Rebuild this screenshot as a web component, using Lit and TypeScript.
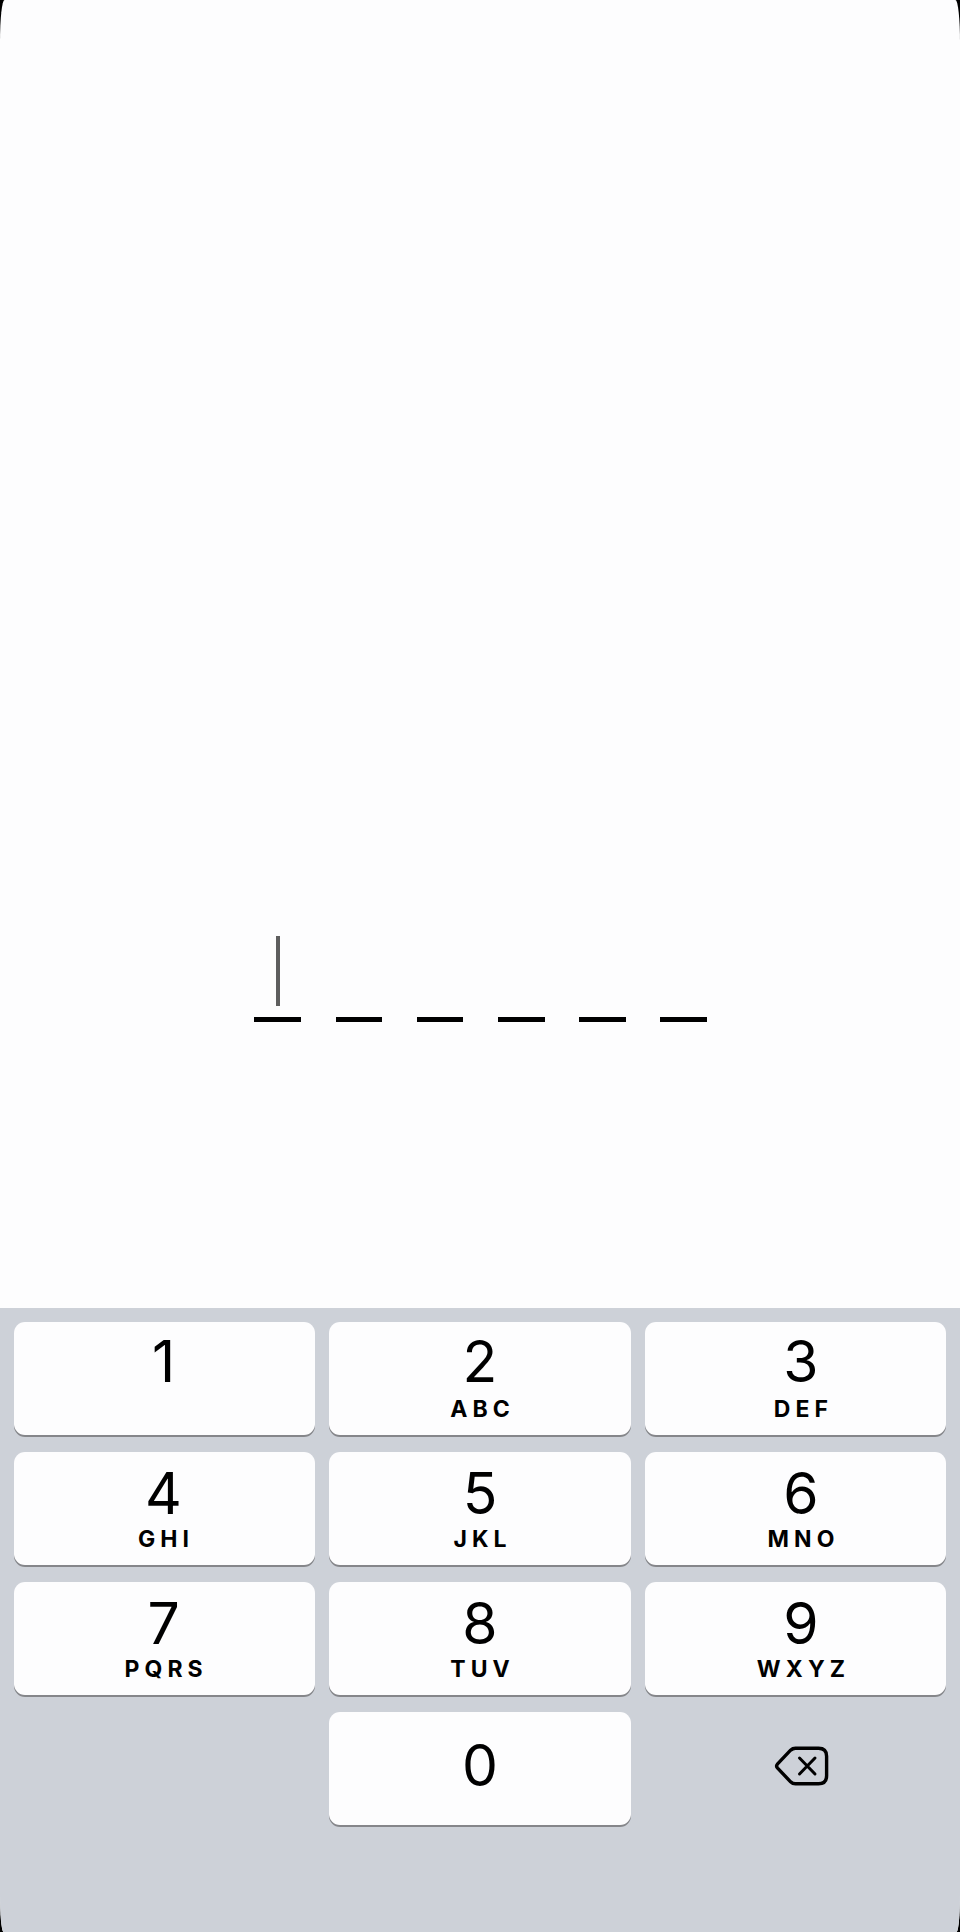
import { LitElement, html, css, nothing } from "lit";
import { customElement, property } from "lit/decorators.js";

@customElement("code-entry")
class CodeEntry extends LitElement {
  static styles = css`
    :host { display: flex; flex-direction: column; }
    .caret { width: 3.6px; height: 70px; margin: 0 0 11px 21.7px; background: #5e5e5e; }
    .slots { display: grid; grid-template-columns: repeat(6, 46.6px); column-gap: 34.6px; }
    .slot { height: 5px; background: #000; }
  `;
  render() {
    return html`<div class="caret"></div>
      <div class="slots">${Array.from({ length: 6 }, () => html`<div class="slot"></div>`)}</div>`;
  }
}

@customElement("pad-key")
class PadKey extends LitElement {
  @property() digit = "";
  @property() letters = "";
  static styles = css`
    :host {
      display: flex; flex-direction: column; align-items: center; box-sizing: border-box;
      height: 113px; padding-top: 21px; border-radius: 11px; background: #fdfdfe;
      box-shadow: 0 2px 0 #85868a; color: #000;
    }
    :host(.first) { padding-top: 19px; }
    :host(.zero) { padding-top: 33px; }
    :host(.left) { padding-right: 2px; }
    :host(.right) { padding-left: 11px; }
    .digit { font: 400 57px/42px Inter, sans-serif; }
    .letters { margin-top: 14px; font: 700 23px/20px Inter, sans-serif; letter-spacing: 5.1px; margin-right: -5.1px; }
    :host(.first) .letters { margin-top: 15.5px; }
  `;
  render() {
    return html`<div class="digit">${this.digit}</div>
      ${this.letters ? html`<div class="letters">${this.letters}</div>` : nothing}`;
  }
}

@customElement("app-root")
class AppRoot extends LitElement {
  static styles = css`
    :host { display: block; height: 1932px; background: #000; }
    .screen {
      height: 1932px; display: flex; flex-direction: column; overflow: hidden;
      background: #fdfdfe; border-radius: 4.5px 4.5px 3.5px 3.5px / 42px 42px 38px 38px;
    }
    .content { height: 1308px; box-sizing: border-box; padding: 936px 0 0 254.4px; }
    .keyboard {
      flex: 1; display: grid; grid-template-columns: repeat(3, 1fr); align-content: start;
      gap: 17px 14px; padding: 14px 13.8px; background: #cdd1d8;
    }
    .delete { display: flex; align-items: center; justify-content: center; padding: 0 0 5px 12.5px; }
    .icon { width: 56px; height: 42px; }
  `;
  render() {
    const letters = ["", "ABC", "DEF", "GHI", "JKL", "MNO", "PQRS", "TUV", "WXYZ"];
    return html`<div class="screen">
      <div class="content"><code-entry></code-entry></div>
      <div class="keyboard">
        ${letters.map((l, i) => html`<pad-key
          class="${i < 3 ? "first" : ""} ${["left", "middle", "right"][i % 3]}"
          .digit=${String(i + 1)} .letters=${l}></pad-key>`)}
        <div></div>
        <pad-key class="zero" .digit=${"0"}></pad-key>
        <div class="delete">
          <svg class="icon" viewBox="0 0 56 42" fill="none" stroke="#000" stroke-linecap="round" stroke-linejoin="round">
            <path stroke-width="3.4" d="M21.5 3.2H44.5Q52.6 3.2 52.6 11.2V30.8Q52.6 38.8 44.5 38.8H21.5Q18.6 38.8 16.6 36.8L3.6 23.2Q1.6 21 3.6 18.8L16.6 5.2Q18.6 3.2 21.5 3.2Z"/>
            <path stroke-width="3" d="M25.5 13L41 29M41 13L25.5 29"/>
          </svg>
        </div>
      </div>
    </div>`;
  }
}
